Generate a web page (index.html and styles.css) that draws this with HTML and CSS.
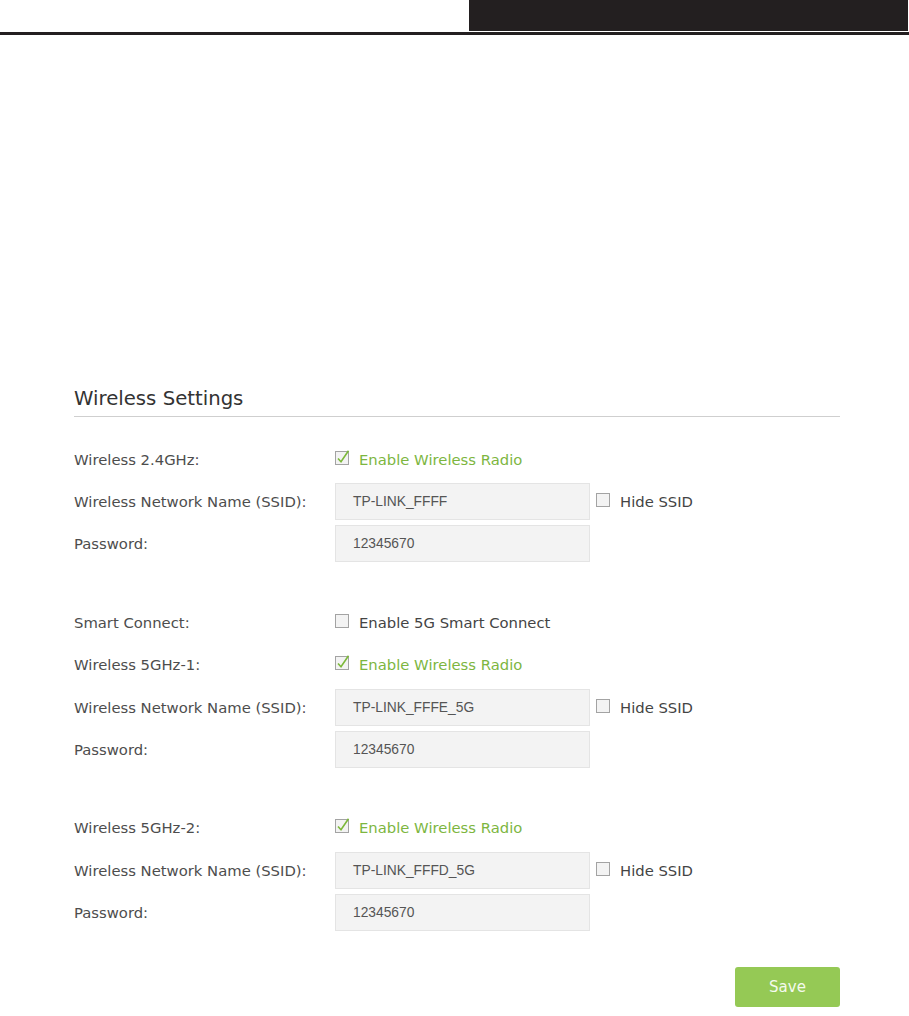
FILE: index.html
```html
<!DOCTYPE html>
<html>
<head>
<meta charset="utf-8">
<link rel="stylesheet" href="styles.css">
</head>
<body>
<div class="top"><div class="top-block"></div></div>
<div class="rule"></div>

<div class="panel">
  <h2 class="title">Wireless Settings</h2>

  <div class="group first">
    <div class="row">
      <span class="label">Wireless 2.4GHz:</span>
      <span class="check on"><svg class="cb" width="16" height="17" viewBox="0 0 16 17"><rect x="0.5" y="1.5" width="13" height="13" fill="#f3f3f3" stroke="#a3a3a3"/><path d="M3 8.5 L6 11.8 L13.5 0.8" fill="none" stroke="#7cb83a" stroke-width="1.6"/></svg>Enable Wireless Radio</span>
    </div>
    <div class="row">
      <span class="label">Wireless Network Name (SSID):</span>
      <span class="input">TP-LINK_FFFF</span>
      <span class="check hide"><svg class="cb" width="16" height="17" viewBox="0 0 16 17"><rect x="0.5" y="1.5" width="13" height="13" fill="#f3f3f3" stroke="#a3a3a3"/></svg>Hide SSID</span>
    </div>
    <div class="row">
      <span class="label">Password:</span>
      <span class="input">12345670</span>
    </div>
  </div>

  <div class="group">
    <div class="row">
      <span class="label">Smart Connect:</span>
      <span class="check"><svg class="cb" width="16" height="17" viewBox="0 0 16 17"><rect x="0.5" y="1.5" width="13" height="13" fill="#f3f3f3" stroke="#a3a3a3"/></svg>Enable 5G Smart Connect</span>
    </div>
    <div class="row">
      <span class="label">Wireless 5GHz-1:</span>
      <span class="check on"><svg class="cb" width="16" height="17" viewBox="0 0 16 17"><rect x="0.5" y="1.5" width="13" height="13" fill="#f3f3f3" stroke="#a3a3a3"/><path d="M3 8.5 L6 11.8 L13.5 0.8" fill="none" stroke="#7cb83a" stroke-width="1.6"/></svg>Enable Wireless Radio</span>
    </div>
    <div class="row">
      <span class="label">Wireless Network Name (SSID):</span>
      <span class="input">TP-LINK_FFFE_5G</span>
      <span class="check hide"><svg class="cb" width="16" height="17" viewBox="0 0 16 17"><rect x="0.5" y="1.5" width="13" height="13" fill="#f3f3f3" stroke="#a3a3a3"/></svg>Hide SSID</span>
    </div>
    <div class="row">
      <span class="label">Password:</span>
      <span class="input">12345670</span>
    </div>
  </div>

  <div class="group">
    <div class="row">
      <span class="label">Wireless 5GHz-2:</span>
      <span class="check on"><svg class="cb" width="16" height="17" viewBox="0 0 16 17"><rect x="0.5" y="1.5" width="13" height="13" fill="#f3f3f3" stroke="#a3a3a3"/><path d="M3 8.5 L6 11.8 L13.5 0.8" fill="none" stroke="#7cb83a" stroke-width="1.6"/></svg>Enable Wireless Radio</span>
    </div>
    <div class="row">
      <span class="label">Wireless Network Name (SSID):</span>
      <span class="input">TP-LINK_FFFD_5G</span>
      <span class="check hide"><svg class="cb" width="16" height="17" viewBox="0 0 16 17"><rect x="0.5" y="1.5" width="13" height="13" fill="#f3f3f3" stroke="#a3a3a3"/></svg>Hide SSID</span>
    </div>
    <div class="row">
      <span class="label">Password:</span>
      <span class="input">12345670</span>
    </div>
  </div>

  <div class="actions">
    <button class="save">Save</button>
  </div>
</div>
</body>
</html>
```
FILE: styles.css
```css
html, body {
  margin: 0;
  padding: 0;
  background: #ffffff;
}
body {
  font-family: "DejaVu Sans", Verdana, sans-serif;
  color: #4a4a4a;
}
.top {
  display: flex;
  justify-content: flex-end;
  height: 31px;
  margin-bottom: 1px;
}
.top-block {
  width: 439px;
  margin-right: 1px;
  background: #231f20;
}
.rule {
  height: 3px;
  background: #231f20;
}
.panel {
  width: 766px;
  margin: 352px 0 0 74px;
}
.title {
  margin: 0;
  font-weight: normal;
  font-size: 19.7px;
  line-height: 24px;
  color: #333333;
  padding-bottom: 5px;
  border-bottom: 1px solid #cfcfcf;
}
.group {
  margin-top: 36px;
}
.group.first {
  margin-top: 21px;
}
.row {
  display: flex;
  align-items: center;
  height: 42.4px;
}
.label {
  width: 261px;
  flex: none;
  font-size: 14.8px;
  color: #4d4d4d;
}
.check {
  display: flex;
  align-items: center;
  font-size: 14.8px;
  color: #444444;
}
.check.on {
  color: #7db63f;
}
.cb {
  flex: none;
  margin-right: 8px;
  margin-top: -2px;
}
.hide {
  margin-left: 6px;
}
.input {
  box-sizing: border-box;
  width: 255px;
  height: 37px;
  flex: none;
  display: flex;
  align-items: center;
  padding-left: 17px;
  background: #f3f3f3;
  border: 1px solid #e4e4e4;
  font-family: "Liberation Sans", Arial, sans-serif;
  font-size: 13.8px;
  color: #555555;
}
.actions {
  display: flex;
  justify-content: flex-end;
  margin-top: 33px;
}
.save {
  width: 105px;
  height: 40px;
  border: none;
  border-radius: 3px;
  background: #95c955;
  color: #f4faee;
  font-family: "DejaVu Sans", Verdana, sans-serif;
  font-size: 15px;
  padding: 0;
}
```
